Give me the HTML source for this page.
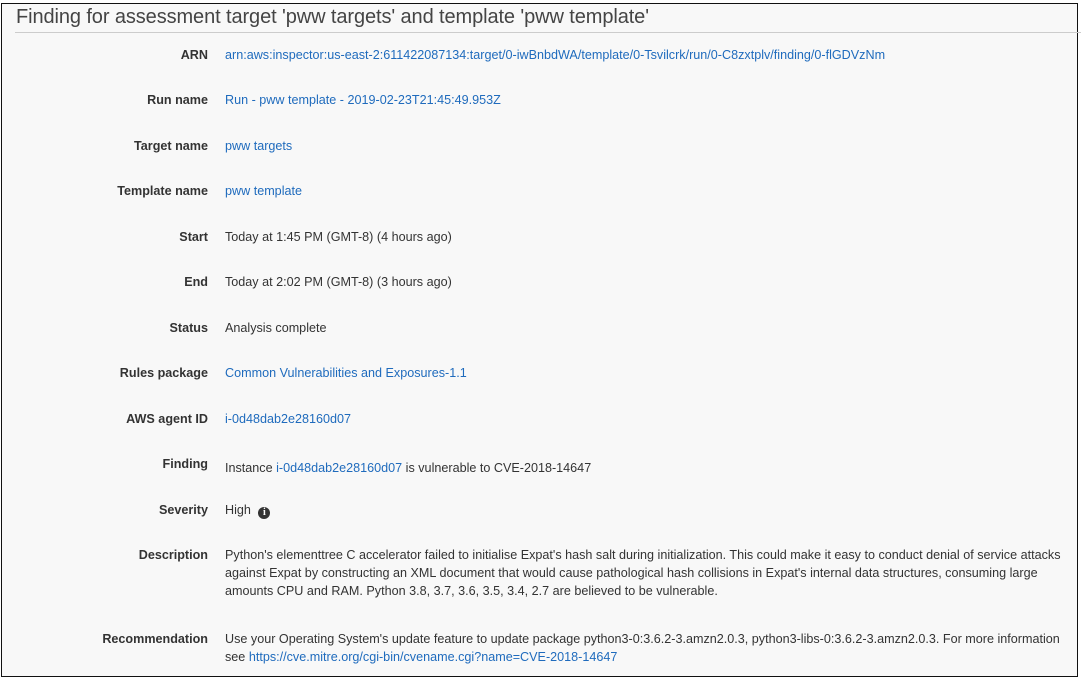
<!DOCTYPE html>
<html><head><meta charset="utf-8"><style>
html,body{margin:0;padding:0;width:1081px;height:677px;overflow:hidden;background:#fff}
.box{position:absolute;left:1px;top:3px;width:1075px;height:672px;border:1px solid #111;background:#f8f8f8}
h1{position:absolute;left:16px;top:6px;margin:0;font:20px "Liberation Sans",Arial,sans-serif;color:#444;white-space:nowrap;letter-spacing:-0.1px}
.hr{position:absolute;left:15px;top:32px;right:0;height:1px;background:#ccc}
.row{position:absolute;left:0;width:1080px;font:12.6px/18px "Liberation Sans",Arial,sans-serif;color:#333}
.l{position:absolute;right:872px;font-weight:bold;white-space:nowrap;text-align:right}
.v{position:absolute;left:225px;width:840px}
a{color:#1f6bbd;text-decoration:none}
.i{display:inline-block;width:12px;height:12px;border-radius:50%;background:#333;color:#fff;font:bold 10px/12px "Liberation Serif",serif;text-align:center;vertical-align:-1px;margin-left:4px}
</style></head><body>
<div class="box"></div>
<h1>Finding for assessment target 'pww targets' and template 'pww template'</h1>
<div class="hr"></div>
<div class="row" style="top:46px"><span class="l">ARN</span><span class="v"><a>arn:aws:inspector:us-east-2:611422087134:target/0-iwBnbdWA/template/0-Tsvilcrk/run/0-C8zxtplv/finding/0-flGDVzNm</a></span></div>
<div class="row" style="top:91px"><span class="l">Run name</span><span class="v"><a>Run - pww template - 2019-02-23T21:45:49.953Z</a></span></div>
<div class="row" style="top:137px"><span class="l">Target name</span><span class="v"><a>pww targets</a></span></div>
<div class="row" style="top:182px"><span class="l">Template name</span><span class="v"><a>pww template</a></span></div>
<div class="row" style="top:228px"><span class="l">Start</span><span class="v">Today at 1:45 PM (GMT-8) (4 hours ago)</span></div>
<div class="row" style="top:273px"><span class="l">End</span><span class="v">Today at 2:02 PM (GMT-8) (3 hours ago)</span></div>
<div class="row" style="top:319px"><span class="l">Status</span><span class="v">Analysis complete</span></div>
<div class="row" style="top:364px"><span class="l">Rules package</span><span class="v"><a>Common Vulnerabilities and Exposures-1.1</a></span></div>
<div class="row" style="top:410px"><span class="l">AWS agent ID</span><span class="v"><a>i-0d48dab2e28160d07</a></span></div>
<div class="row" style="top:455px"><span class="l">Finding</span><span class="v" style="top:4px">Instance <a>i-0d48dab2e28160d07</a> is vulnerable to CVE-2018-14647</span></div>
<div class="row" style="top:501px"><span class="l">Severity</span><span class="v">High <span class="i">i</span></span></div>
<div class="row" style="top:546px"><span class="l">Description</span><span class="v">Python's elementtree C accelerator failed to initialise Expat's hash salt during initialization. This could make it easy to conduct denial of service attacks<br>against Expat by constructing an XML document that would cause pathological hash collisions in Expat's internal data structures, consuming large<br>amounts CPU and RAM. Python 3.8, 3.7, 3.6, 3.5, 3.4, 2.7 are believed to be vulnerable.</span></div>
<div class="row" style="top:630px"><span class="l">Recommendation</span><span class="v">Use your Operating System's update feature to update package python3-0:3.6.2-3.amzn2.0.3, python3-libs-0:3.6.2-3.amzn2.0.3. For more information<br>see <a>https://cve.mitre.org/cgi-bin/cvename.cgi?name=CVE-2018-14647</a></span></div>
</body></html>
